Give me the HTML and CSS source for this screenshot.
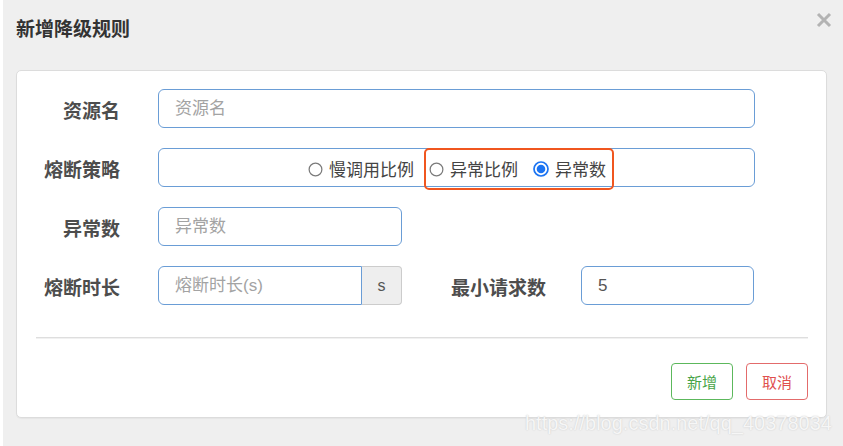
FILE: index.html
```html
<!DOCTYPE html>
<html lang="zh-CN">
<head>
<meta charset="utf-8">
<title>新增降级规则</title>
<link rel="stylesheet" href="styles.css">
</head>
<body>
<div class="screen">
  <div class="modal-header">
    <h4 class="title">新增降级规则</h4>
    <span class="close" aria-label="关闭">
      <svg width="16" height="16" viewBox="0 0 16 16"><path d="M2 2 L14 14 M14 2 L2 14" stroke="#b3b3b3" stroke-width="3" stroke-linecap="butt"/></svg>
    </span>
  </div>
  <div class="card">
    <form class="form">
      <div class="row">
        <label class="lbl">资源名</label>
        <input class="field field-wide" type="text" placeholder="资源名">
      </div>
      <div class="row">
        <label class="lbl">熔断策略</label>
        <div class="radio-box">
          <span class="radio"><svg class="rd" width="15" height="15" viewBox="0 0 16 16"><circle cx="8" cy="8" r="6.8" fill="#fff" stroke="#7a7a7a" stroke-width="1.3"/></svg><span class="rtext">慢调用比例</span></span>
          <span class="highlight">
            <span class="radio"><svg class="rd" width="15" height="15" viewBox="0 0 16 16"><circle cx="8" cy="8" r="6.8" fill="#fff" stroke="#7a7a7a" stroke-width="1.3"/></svg><span class="rtext">异常比例</span></span>
            <span class="radio"><svg class="rd" width="16" height="16" viewBox="0 0 16 16"><circle cx="8" cy="8" r="7" fill="#fff" stroke="#1c74f2" stroke-width="1.7"/><circle cx="8" cy="8" r="4.3" fill="#1c74f2"/></svg><span class="rtext">异常数</span></span>
          </span>
        </div>
      </div>
      <div class="row">
        <label class="lbl">异常数</label>
        <input class="field field-mid" type="text" placeholder="异常数">
      </div>
      <div class="row">
        <label class="lbl">熔断时长</label>
        <div class="group">
          <input class="field field-left" type="text" placeholder="熔断时长(s)">
          <span class="addon">s</span>
        </div>
        <label class="lbl lbl-inline">最小请求数</label>
        <input class="field field-small" type="text" value="5">
      </div>
    </form>
    <div class="divider"></div>
    <div class="actions">
      <button class="btn btn-green" type="button">新增</button>
      <button class="btn btn-red" type="button">取消</button>
    </div>
  </div>
  <div class="watermark">https://blog.csdn.net/qq_40378034</div>
</div>
</body>
</html>
```

FILE: styles.css
```css
html, body {
  margin: 0;
  padding: 0;
  background: #ffffff;
}

.screen {
  position: relative;
  margin-left: 3px;
  height: 446px;
  background: #efefef;
  font-family: "Liberation Sans", "Noto Sans CJK SC", sans-serif;
  overflow: hidden;
}

.modal-header {
  display: flex;
  justify-content: space-between;
  align-items: flex-start;
  height: 70px;
  box-sizing: border-box;
  padding: 12px 11px 0 13px;
}

.title {
  margin: 2px 0 0 0;
  font-family: "Noto Sans CJK SC", sans-serif;
  font-size: 19px;
  line-height: 27px;
  font-weight: 700;
  color: #333333;
}

.close {
  display: block;
  width: 16px;
  height: 16px;
}

.close svg {
  display: block;
}

.card {
  margin-left: 13px;
  width: 811px;
  box-sizing: border-box;
  background: #ffffff;
  border: 1px solid #dcdcdc;
  border-radius: 5px;
  box-shadow: 0 1px 1px rgba(0, 0, 0, 0.04);
  padding: 18px 0 17px 0;
}

.form {
  display: flex;
  flex-direction: column;
  gap: 20px;
  margin: 0;
}

.row {
  display: flex;
  align-items: center;
  height: 39px;
}

.lbl {
  width: 103px;
  margin-right: 38px;
  text-align: right;
  font-family: "Noto Sans CJK SC", sans-serif;
  font-size: 19px;
  font-weight: 700;
  color: #4d4d4d;
  line-height: 27px;
  padding-top: 2px;
}

.lbl-inline {
  width: auto;
  margin-left: 49px;
  margin-right: 35px;
}

.field {
  height: 39px;
  box-sizing: border-box;
  border: 1px solid #6a9dd6;
  border-radius: 6px;
  padding: 0 16px;
  font-family: "Liberation Sans", "Noto Sans CJK SC", sans-serif;
  font-size: 17px;
  color: #555555;
  background: #ffffff;
  outline: none;
  margin: 0;
}

.field::placeholder {
  color: #a3a3a3;
}

.field-wide {
  width: 597px;
}

.field-mid {
  width: 244px;
}

.field-small {
  width: 173px;
}

.group {
  display: flex;
  height: 39px;
}

.field-left {
  width: 204px;
  border-radius: 6px 0 0 6px;
}

.addon {
  display: flex;
  align-items: center;
  justify-content: center;
  width: 40px;
  height: 39px;
  box-sizing: border-box;
  background: #eeeeee;
  border: 1px solid #cccccc;
  border-left: none;
  border-radius: 0 4px 4px 0;
  font-size: 16px;
  color: #555555;
}

.radio-box {
  width: 597px;
  height: 39px;
  box-sizing: border-box;
  border: 1px solid #6a9dd6;
  border-radius: 6px;
  display: flex;
  justify-content: center;
  align-items: center;
  gap: 15px;
  padding-top: 3px;
  padding-left: 1px;
}

.highlight {
  position: relative;
  display: flex;
  align-items: center;
  gap: 15px;
  height: 24px;
}

.highlight::after {
  content: "";
  position: absolute;
  top: -9px;
  bottom: -9px;
  left: -5px;
  right: -8px;
  border: 2.5px solid #f0561f;
  border-radius: 5px;
  pointer-events: none;
}

.radio {
  display: flex;
  align-items: center;
  height: 24px;
}

.rd {
  display: block;
  flex: none;
}

.rtext {
  margin-left: 6px;
  font-family: "Noto Sans CJK SC", sans-serif;
  font-size: 17px;
  line-height: 24px;
  color: #444444;
}

.divider {
  margin: 32px 18px 0 19px;
  height: 0;
  border-top: 1px solid #dedede;
  border-bottom: 1px solid #f1f1f1;
}

.actions {
  display: flex;
  justify-content: flex-end;
  gap: 13px;
  margin: 24px 18px 0 0;
}

.btn {
  width: 62px;
  height: 37px;
  box-sizing: border-box;
  border-radius: 4px;
  background: #ffffff;
  font-family: "Noto Sans CJK SC", sans-serif;
  font-size: 15px;
  padding: 0;
  cursor: pointer;
}

.btn-green {
  border: 1.5px solid #5cb85c;
  color: #47a447;
}

.btn-red {
  border: 1.5px solid #e36b6b;
  color: #e04f4f;
}

.watermark {
  position: absolute;
  left: 522px;
  top: 413px;
  font-family: "Liberation Sans", sans-serif;
  font-size: 20px;
  line-height: 20px;
  color: #f6f6f6;
  text-shadow: 0 0 1.5px #c4c4c4;
  white-space: nowrap;
  pointer-events: none;
}
```
